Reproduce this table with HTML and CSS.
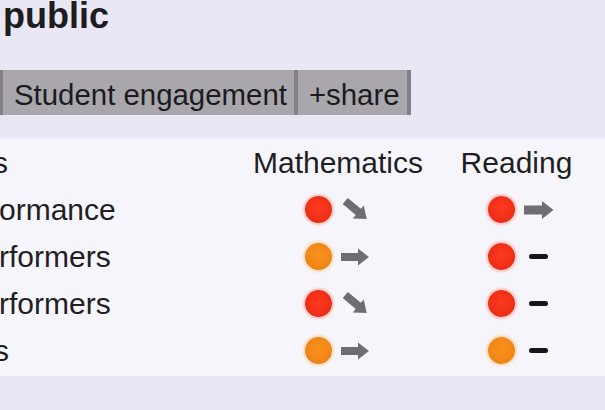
FILE: index.html
```html
<!DOCTYPE html>
<html lang="en">
<head>
<meta charset="utf-8">
<title>Country profile</title>
<link rel="stylesheet" href="styles.css">
</head>
<body>
<div class="page">
  <h1 class="title">public</h1>

  <nav class="tabs">
    <span class="tab">Student engagement</span>
    <span class="tab">+share</span>
  </nav>

  <section class="panel">
    <div class="grid">
      <div class="label cut-hs">s</div>
      <div class="head">Mathematics</div>
      <div class="head">Reading</div>

      <div class="label cut-1">ormance</div>
      <div class="cell">
        <span class="dot red"></span>
        <span class="ind"><svg class="arrow" viewBox="0 0 30 30" width="30" height="30"><path transform="rotate(40 15 15)" d="M1 11h17V6.5L29 15 18 23.5V19H1z"/></svg></span>
      </div>
      <div class="cell read">
        <span class="dot red"></span>
        <span class="ind"><svg class="arrow" viewBox="0 0 30 20" width="30" height="20"><path d="M0 5.5h18V1L29.5 10 18 19V14.5H0z"/></svg></span>
      </div>

      <div class="label cut-1">rformers</div>
      <div class="cell">
        <span class="dot orange"></span>
        <span class="ind"><svg class="arrow" viewBox="0 0 30 20" width="30" height="20"><path d="M0 6h17V1.5L28 10 17 18.5V14H0z"/></svg></span>
      </div>
      <div class="cell read">
        <span class="dot red"></span>
        <span class="ind"><span class="dash"></span></span>
      </div>

      <div class="label cut-1">rformers</div>
      <div class="cell">
        <span class="dot red"></span>
        <span class="ind"><svg class="arrow" viewBox="0 0 30 30" width="30" height="30"><path transform="rotate(40 15 15)" d="M1 11h17V6.5L29 15 18 23.5V19H1z"/></svg></span>
      </div>
      <div class="cell read">
        <span class="dot red"></span>
        <span class="ind"><span class="dash"></span></span>
      </div>

      <div class="label cut-s">s</div>
      <div class="cell">
        <span class="dot orange"></span>
        <span class="ind"><svg class="arrow" viewBox="0 0 30 20" width="30" height="20"><path d="M0 6h17V1.5L28 10 17 18.5V14H0z"/></svg></span>
      </div>
      <div class="cell read">
        <span class="dot orange"></span>
        <span class="ind"><span class="dash"></span></span>
      </div>
    </div>
  </section>
</div>
</body>
</html>
```

FILE: styles.css
```css
html, body {
  margin: 0;
  padding: 0;
  background: #e9e7f4;
}

.page {
  width: 605px;
  height: 410px;
  overflow: hidden;
  font-family: "Liberation Sans", Arial, sans-serif;
  color: #1f1f23;
}

.title {
  margin: 0;
  padding: 1px 0 0 3px;
  font-size: 36px;
  font-weight: bold;
  line-height: 29px;
  color: #1c1c21;
}

.tabs {
  display: flex;
  margin-top: 40px;
  height: 45px;
  border-left: 3px solid #838187;
}

.tab {
  display: block;
  padding: 4px 7px 0 11px;
  line-height: 41px;
  font-size: 29.4px;
  background: #a9a7ac;
  border-right: 4px solid #838187;
  color: #1b1b1f;
  white-space: nowrap;
}

.panel {
  margin-top: 23px;
  background: #f6f5fb;
  padding-bottom: 2px;
  border-top: 1px solid #f1f0f8;
}

.grid {
  display: grid;
  grid-template-columns: 248px 180px 1fr;
  grid-auto-rows: 47px;
  align-items: center;
  font-size: 30px;
  line-height: 47px;
}

.label {
  white-space: nowrap;
  overflow: hidden;
}

.cut-hs { margin-left: -7px; }
.cut-s { margin-left: -6px; }
.cut-1 { margin-left: -1px; }

.head {
  text-align: center;
}

.cell {
  display: flex;
  align-items: center;
  justify-content: center;
  gap: 9px;
  height: 47px;
}

.cell.read {
  padding-left: 8px;
}

.dot {
  display: block;
  width: 27px;
  height: 27px;
  border-radius: 50%;
}

.dot.red {
  background: radial-gradient(circle at 50% 45%, #ff3a1e 0%, #ee2f18 60%, #cf2614 100%);
  box-shadow: 0 0 2px 2px rgba(255, 140, 120, 0.45);
}

.dot.orange {
  background: radial-gradient(circle at 50% 45%, #fb921c 0%, #f08616 60%, #dc7612 100%);
  box-shadow: 0 0 2px 2px rgba(255, 200, 140, 0.55);
}

.ind {
  display: flex;
  align-items: center;
  width: 30px;
  height: 30px;
}

.arrow {
  display: block;
  fill: #6e6d73;
}

.dash {
  display: block;
  margin-left: 5px;
  width: 19px;
  height: 5px;
  border-radius: 3px;
  background: #161618;
}
```
